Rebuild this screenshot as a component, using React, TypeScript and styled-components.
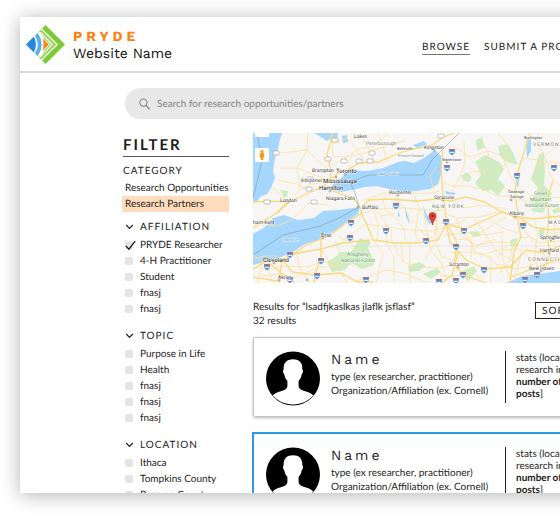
import React, { useState } from "react";
import styled, { createGlobalStyle, css } from "styled-components";

const GlobalStyle = createGlobalStyle`
  * { box-sizing: border-box; }
  body { margin: 0; background: #fff; overflow: hidden; text-rendering: geometricPrecision; }
  button, input { font: inherit; color: inherit; text-rendering: inherit; }
`;

const Stage = styled.div`
  height: 100vh;
  padding: 17px 0 24px 20px;
  overflow: hidden;
  font-family: Lato, "Liberation Sans", sans-serif;
  font-size: 10px;
  line-height: 16px;
  color: #1c1c1c;
`;

const Page = styled.div`
  height: 100%;
  margin-right: -30px;
  padding-right: 30px;
  overflow: hidden;
  background: #fff;
  box-shadow: 0 2px 18px rgba(0, 0, 0, 0.3);
`;

const Header = styled.header`
  display: flex;
  align-items: center;
  height: 56px;
  padding-left: 6px;
  border-bottom: 2px solid #d9d9d9;
  white-space: nowrap;
`;

const Brand = styled.a`
  display: flex;
  align-items: center;
  gap: 8px;
  flex: 0 0 396px;
  color: #111;
  text-decoration: none;
  font-family: "Work Sans", Inter, "Liberation Sans", sans-serif;
`;

const BrandText = styled.span`
  display: flex;
  flex-direction: column;
  padding-top: 3px;
  font-size: 14px;
  line-height: 17px;
`;

const BrandTitle = styled.strong`
  color: #fb8312;
  letter-spacing: 4px;
`;

const Nav = styled.nav`
  display: flex;
  gap: 14px;
  padding-top: 7px;
`;

const NavLink = styled.a<{ $active?: boolean }>`
  color: #1c1c1c;
  font-size: 10px;
  line-height: 13px;
  letter-spacing: 1px;
  text-decoration: none;
  border-bottom: 1px solid ${(p) => (p.$active ? "#777" : "transparent")};
`;

const SearchBar = styled.label`
  display: flex;
  align-items: center;
  gap: 7px;
  height: 31px;
  margin: 15px 0 0 105px;
  padding-left: 14px;
  border-radius: 16px 0 0 16px;
  background: #e8e8e8;
  color: #858585;
`;

const SearchInput = styled.input`
  flex: 1;
  min-width: 0;
  padding: 0;
  border: 0;
  outline: 0;
  background: transparent;
  &::placeholder { color: #858585; opacity: 1; }
`;

const Columns = styled.div`
  display: grid;
  grid-template-columns: 107px minmax(0, 1fr);
  gap: 24px;
  padding: 14px 0 0 102px;
`;

const Sidebar = styled.aside`
  white-space: nowrap;
`;

const FilterTitle = styled.h2`
  margin: 0 0 6px 1px;
  padding-top: 2px;
  border-bottom: 1px solid #555;
  font-size: 15px;
  line-height: 21px;
  letter-spacing: 2px;
`;

const GroupLabel = styled.h3`
  margin: 0 0 0 1px;
  font-size: 10px;
  font-weight: 400;
  line-height: 17px;
  letter-spacing: 1px;
`;

const CategoryButton = styled.button<{ $selected?: boolean }>`
  display: block;
  width: 100%;
  height: 16px;
  padding: 0 3px;
  border: 0;
  text-align: left;
  background: ${(p) => (p.$selected ? "#ffdcbc" : "transparent")};
`;

const Groups = styled.div`
  display: flex;
  flex-direction: column;
  gap: 9px;
  padding-top: 5px;
`;

const GroupToggle = styled.button`
  display: flex;
  align-items: center;
  gap: 6px;
  height: 20px;
  padding: 0 0 0 3px;
  border: 0;
  background: transparent;
  letter-spacing: 1px;
`;

const Option = styled.label`
  display: flex;
  align-items: center;
  gap: 7px;
  height: 16px;
  padding-left: 3px;
`;

const TickBox = styled.span`
  display: grid;
  width: 8px;
  height: 8px;
  > * { grid-area: 1 / 1; }
  svg { place-self: end center; pointer-events: none; overflow: visible; }
`;

const Check = styled.input`
  appearance: none;
  width: 8px;
  height: 8px;
  margin: 0;
  border-radius: 2px;
  background: #e4e4e4;
`;

const Main = styled.main`
  min-width: 0;
`;

const MapFrame = styled.div`
  height: 150px;
  overflow: hidden;
  svg { display: block; height: 100%; }
`;

const ResultsBar = styled.div`
  display: flex;
  justify-content: space-between;
  align-items: flex-start;
  padding: 17px 0 9px;
  line-height: 14px;
  white-space: nowrap;
`;

const SortSlot = styled.div`
  flex: 0 0 25px;
  min-width: 0;
  padding-top: 2px;
`;

const SortButton = styled.button`
  height: 17px;
  padding: 0 6px;
  border: 1px solid #222;
  background: #fff;
  line-height: 14px;
  letter-spacing: 1px;
`;

const Cards = styled.div`
  display: flex;
  flex-direction: column;
  gap: 16px;
`;

const Card = styled.article<{ $selected?: boolean }>`
  display: grid;
  grid-template-columns: 54px minmax(0, 1fr) 55px;
  height: 80px;
  padding: 13px 0 12px 12px;
  border: 1px solid #c4c4c4;
  border-radius: 2px;
  box-shadow: 0 1px 3px rgba(0, 0, 0, 0.28);
  white-space: nowrap;
  margin-right: -4px;
  padding-right: 3px;
  ${(p) =>
    p.$selected &&
    css`
      border-color: transparent;
      border-radius: 0;
      outline: 2px solid #2b9be8;
      outline-offset: -1px;
      box-shadow: none;
    `}
`;

const Details = styled.div`
  padding-left: 11px;
  line-height: 14px;
`;

const PersonName = styled.h3`
  margin: 0 0 1px;
  font: 400 14px/18px "Work Sans", Inter, "Liberation Sans", sans-serif;
  letter-spacing: 3px;
`;

const Stats = styled.div`
  height: 52px;
  padding: 1px 0 0 10px;
  border-left: 1px solid #222;
  line-height: 12px;
`;

const Logo = () => (
  <svg width="39" height="39" viewBox="0 0 39 39" aria-hidden="true">
    <path d="M19.5 0 39 19.5 19.5 39 16.1 35.6 32.2 19.5 16.1 3.4Z" fill="#7bcb35" />
    <path d="M15.2 4.3 30.4 19.5 15.2 34.7 12.8 32.3Q19.4 27 20 19.5 19.4 12 12.8 6.7Z" fill="#9ad95c" />
    <path d="M14.2 7.2 26.3 19.5 14.2 31.8" fill="none" stroke="#fff" strokeWidth="1.1" />
    <path d="M15.2 11 23.700 19.500 15.200 28Q18.600 19.500 15.200 11Z" fill="#fff" />
    <path d="M16.5 13.2 22.7 19.5 16.5 25.8Q18.6 19.5 16.5 13.2Z" fill="#fb8312" />
    <path d="M11.8 7.7 9 10.5Q14.5 19.5 9 28.5L11.8 31.3Q19.4 19.5 11.8 7.7Z" fill="#55b1ed" />
    <path d="M7.9 11.6 0 19.5 7.9 27.4Q12 19.5 7.9 11.6Z" fill="#2489df" />
  </svg>
);

const SearchIcon = () => (
  <svg width="11" height="12" viewBox="0 0 11 12" fill="none" stroke="currentColor" aria-hidden="true">
    <circle cx="4.4" cy="4.6" r="3.6" strokeWidth="1.1" />
    <path d="m7 7.4 3.5 3.8" strokeWidth="1.3" />
  </svg>
);

const Chevron = () => (
  <svg width="9" height="6" viewBox="0 0 9 6" fill="none" stroke="#222" strokeWidth="1.2" aria-hidden="true">
    <path d="m1.2 1 3.3 3.5L7.8 1" />
  </svg>
);

const TickMark = () => (
  <svg width="11" height="10" viewBox="0 0 11 10" fill="none" stroke="#111" strokeWidth="1.2" aria-hidden="true">
    <path d="m.8 4.8 3.1 3.4L10.2.2" />
  </svg>
);

const Avatar = () => (
  <svg width="54" height="55" viewBox="0 0 54 55" aria-hidden="true">
    <circle cx="27" cy="27.5" r="27" fill="#000" />
    <path
      d="M27 8.3c6.5 0 9.7 3.6 9.3 10.2 1 .2 1 3.6-.5 4.4-.5 3.4-1.5 5.2-3.2 6.8v5.2c.4 3.6 3.8 4.5 8.2 5.8 3.2 1 5.2 2.2 6.6 3.9C42 50.4 35.2 53.5 27 53.5S12 50.4 6.6 44.6c1.4-1.7 3.4-2.9 6.6-3.9 4.4-1.3 7.8-2.2 8.2-5.8v-5.2c-1.7-1.6-2.7-3.4-3.2-6.8-1.5-.8-1.5-4.2-.5-4.4C17.3 11.9 20.5 8.3 27 8.3Z"
      fill="#fff"
    />
  </svg>
);

const MapText = styled.text<{ $tone?: string; $size?: number }>`
  font-family: Roboto, "Liberation Sans", sans-serif;
  font-size: ${(p) => p.$size ?? 5}px;
  fill: ${(p) => p.$tone ?? "#444"};
  stroke: #fff;
  stroke-width: 1px;
  stroke-opacity: 0.7;
  paint-order: stroke;
`;

const highways = [
  "M0 95 14 86 24 80 36 69 47 64 60 58 70 53 77 48 84 41 93 38 106 30 125 29 146 20 160 16 178 13 190 4 202 0",
  "M36 69 16 68 0 69M24 80 35 68M77 57 88 61 101 66 107 74 109 80 93 90 76 103 53 112 39 122 30 128 15 127 0 136",
  "M109 74 116 67 133 66 150 67 165 68 184 66 197 68 213 64 232 69 247 78 261 83 280 86 307 83",
  "M190 15 188 38 190 62 192 76 193 90 203 107 205 120 199 142 189 150",
  "M107 79 114 92 120 107 142 110 165 110 185 107 193 91 212 96 232 87 249 79 262 84",
  "M23 129 34 124 45 120 68 116 89 110 117 107M15 129 33 144 42 150M29 126 39 139 62 142 88 140 104 149 120 149",
  "M68 101 68 123 62 143 61 150M29 127 26 150M0 144 23 148 34 142",
  "M265 81 262 60 264 42 270 22 277 0M264 83 268 104 261 119 257 150M265 83 280 94 295 97 307 96",
  "M193 91 197 109 212 126 232 136 257 134 273 117 290 120 307 113M203 118 201 132 213 143 234 150",
  "M300 47 294 67 296 84 294 103 297 121 290 138M256 145 276 137 307 126M77 49 78 38 74 21 80 0",
];

const roads = [
  "M8 92 24 93 38 87 56 70 75 72M36 69 47 57 60 51 77 47M27 35 44 35 64 43 77 48M25 47 44 51 56 58M20 54 35 69M44 35 47 56M27 20 54 17 66 28 78 39M55 0 54 17 44 35M78 0 80 24 96 23 105 16 121 13 136 0M80 11 94 5 102 14 112 29M95 38 98 23 116 19 133 13 152 8M106 0 113 11 121 28M124 0 130 11 133 28M70 23 81 32 96 23",
  "M109 68 130 60 153 59 173 61 187 58M110 80 125 76 151 75 172 77 190 78M116 67 121 78 125 91 124 108M130 66 132 76 142 84 151 96 153 110M142 57 144 69 151 74 158 87 170 100 181 106M160 59 165 72 171 82 175 105M112 91 134 94 157 97 179 98 193 94M120 107 130 121 123 150M141 110 145 121 154 131 170 134 184 135 202 132M157 110 157 150M175 105 178 118 189 131 194 149M104 148 133 137 150 140 175 150",
  "M193 66 204 50 212 31 211 9M188 49 200 53 214 53 230 56 244 63 262 63M196 66 210 75 230 72 253 76M191 80 204 85 227 84 244 79M184 78 183 109 172 126M204 86 209 104 223 112 243 109 264 110M222 86 233 102 244 119 260 128M235 85 249 95 267 101M217 105 222 120 237 124 250 139M203 107 217 105 237 94 253 84M198 119 214 119 232 121 254 114M212 128 215 150M237 124 238 150M249 98 249 124 258 149M184 33 177 43 182 61M200 13 217 24 235 18 256 25M208 51 219 38 238 40 257 29M229 8 236 22 229 43 244 55 263 57M245 0 256 14 251 29 259 46 268 56 284 66 307 64",
  "M269 25 285 27 307 30M263 65 279 70 307 76M269 85 273 101 287 110 307 108M273 117 278 132 275 145M265 105 278 104 285 116 299 130 307 129M281 84 285 101 282 118 284 137M294 103 307 99M302 84 301 107 305 125M285 0 289 21 284 41 289 65M307 10 292 23 298 44 307 52M260 111 257 127 246 141M269 113 267 125 261 149M242 131 265 136 284 130",
  "M0 134 15 136 34 133 54 134 70 129 96 129 122 129M0 122 13 130 19 147M9 128 5 150M43 120 47 136 57 150M68 116 77 130 88 140 94 150M82 108 88 122 101 134M35 147 54 139 68 134 90 133M8 143 28 141M84 103 97 109 105 120 119 122M133 91 134 112 141 124 141 150M112 92 98 101 88 111M0 126 12 123 24 123",
  "M181 86 191 91 202 91 213 87M190 102 206 101 218 99 232 102 250 99M207 93 218 111 218 126M220 117 231 109 244 106M184 88 181 100 187 107M184 112 188 123 200 128 205 139M186 142 200 144 218 138 229 146M244 125 250 117 267 116M166 76 162 100 166 110M148 110 150 130M127 83 138 96 139 110M120 72 129 83 142 80",
];

const forests = [
  "M98 119 107 105 118 109 115 115 119 124 121 132 109 136 98 130 92 137 79 139 74 129 84 123 86 119Z",
  "M222 29 232 22 246 29 251 36 245 46 252 53 245 63 239 57 230 58 222 50 228 42 225 34Z",
  "M245 13 255 11 260 20 265 32 252 28 247 23Z",
  "M286 22 291 19 292 38 291 52 299 60 290 80 278 78 281 64 285 55 278 46Z",
  "M223 7 229 4 232 14 224 18ZM208 43 214 39 219 44 216 49 211 48ZM27 57 35 58 34 64 31 64Z",
  "M155 133 166 129 173 133 166 138 156 139ZM170 141 184 135 188 139 178 146ZM216 99 225 98 228 103 220 104ZM257 107 264 105 264 113 258 114ZM182 72 188 75 184 78Z",
  "M207 139 221 133 224 138 215 148ZM299 77 307 74 307 79 301 81ZM286 95 292 94 290 105 286 103Z",
];

const shields = [
  [98, 90], [97, 105], [37, 122], [14, 134], [68, 128], [64, 143], [133, 98], [37, 147], [143, 73],
  [199, 19], [194, 35], [264, 43], [193, 89], [211, 98], [173, 108], [203, 114], [270, 93], [231, 137],
  [210, 142], [203, 148], [186, 149], [284, 142], [301, 35], [272, 147], [113, 147],
];
const routes = [[23, 20], [82, 7], [106, 28], [119, 20], [91, 28], [56, 56], [57, 46], [14, 69], [61, 69], [188, 3], [117, 28], [75, 26]];

type Place = [string, number, number, number?, string?];
const places: Place[] = [
  ["Toronto", 83, 40, 6, "#222"], ["Brampton", 59, 39], ["Mississauga", 70, 50, 6, "#222"],
  ["Kitchener", 48, 49], ["Hamilton", 66, 57, 6, "#222"], ["London", 27, 69], ["Niagara Falls", 73, 67],
  ["Buffalo", 109, 76], ["Rochester", 136, 61], ["Erie", 68, 104, 6], ["Cleveland", 10, 129, 6, "#222"],
  ["Akron", 25, 146], ["ham-Kent", 0, 91], ["Peterborough", 113, 12, 5, "#888"], ["Lakes", 101, 5],
  ["Belleville", 144, 17, 4], ["Prince Edward", 145, 24, 4, "#888"], ["Kingston", 171, 16], ["Watertown", 189, 28, 4],
  ["Syracuse", 181, 66], ["Albany", 256, 82], ["Saratoga", 255, 60, 4], ["Springs", 257, 65, 4],
  ["Burlington", 271, 6, 4], ["Scranton", 196, 133], ["Springfield", 287, 106], ["Hartford", 287, 119],
  ["New Haven", 276, 137], ["Lake Ontario", 124, 42, 4, "#5d9fc9"], ["Lake Erie", 29, 108, 4, "#5d9fc9"],
  ["Allegheny", 94, 123, 5, "#5c956b"], ["National Forest", 88, 129, 5, "#5c956b"],
  ["Green", 281, 62, 5, "#5c956b"], ["Mountain", 277, 68, 5, "#5c956b"], ["National Forest", 272, 74, 5, "#5c956b"],
];
const dots = [[92, 41], [83, 44], [57, 49], [77, 58], [35, 69], [105, 74], [145, 62], [70, 105], [21, 130], [26, 147], [181, 17], [194, 29], [190, 67], [262, 84], [258, 67], [205, 134], [298, 107], [296, 120], [288, 138], [54, 147]];
const states: [string, number, number][] = [["NEW YORK", 179, 75], ["VERMONT", 280, 13], ["MASSACHUSETTS", 295, 91], ["CONNECTICUT", 275, 128]];

const StateText = styled(MapText)`
  letter-spacing: 1px;
`;

const RegionMap = () => (
  <svg viewBox="0 0 307 150" preserveAspectRatio="xMinYMin slice" role="img" aria-label="Map of New York">
    <rect width="340" height="150" fill="#f7f6f4" />
    <g fill="#ceedc4">{forests.map((d) => <path key={d} d={d} />)}</g>
    <g fill="#a5d6fd">
      <path d="M0 0H29L27 6 25 15 23 21 21 31 20 38 22 45 18 55 14 61 7 64 4 69H0Z" />
      <path d="M61 0H85L84 7 78 5 74 8 66 3ZM89 3 94 2 95 9 90 10Z" />
      <path d="M79 57 78 53 86 47 92 41 98 37 114 38 130 35 145 29 152 28 161 30 171 25 182 17 188 23 189 39 185 51 177 56 163 58 147 58 136 56 124 53 112 54 99 57 88 59Z" />
      <path d="M0 101 12 94 20 85 31 82 45 87 61 85 70 78 85 77 107 74 105 81 94 89 83 97 68 106 52 111 40 119 28 124 15 128 0 132Z" />
      <path d="M253 150 269 143 285 141 307 138V150ZM273 7 278 3 278 18 274 25ZM263 51 267 43 265 54ZM192 58 203 60 201 62 193 61Z" />
      <path d="M152 74 156 87 157 92 153 84ZM170 72 172 84 177 92 178 89 173 80ZM145 77 147 83 145 84ZM160 12 171 8 174 11 164 15Z" />
    </g>
    <g fill="none" stroke="#fbe2a0" strokeWidth=".8">{roads.map((d) => <path key={d} d={d} />)}</g>
    <g fill="none" stroke="#fbd978" strokeWidth="1.3">{highways.map((d) => <path key={d} d={d} />)}</g>
    <path d="M4 0 9 27 4 49 0 65M0 122 30 102 67 93 86 85 106 74 102 60 97 49 116 42H170L179 27 194 12 206 0" fill="none" stroke="#839aaa" strokeWidth=".6" />
    <path d="M80 113H307M57 96V113" fill="none" stroke="#c5c5c5" strokeWidth=".4" strokeDasharray="2 1" />
    <g fill="#fff" stroke="#888" strokeWidth=".5">
      {routes.map(([x, y]) => <rect key={`${x}-${y}`} x={x - 3} y={y - 2} width="6" height="4" rx="1" />)}
    </g>
    {shields.map(([x, y]) => (
      <g key={`${x}-${y}`} transform={`translate(${x} ${y})`}>
        <path d="M-3-3H3Q4 1 0 3.5-4 1-3-3Z" fill="#4f86d0" stroke="#fff" strokeWidth=".4" />
        <path d="M-3-2.4H3" stroke="#c7645f" strokeWidth="1" />
        <path d="M-1.8.4H1.8" stroke="#fff" strokeWidth="1.2" />
      </g>
    ))}
    <g fill="#fff" stroke="#555" strokeWidth=".5">{dots.map(([x, y]) => <circle key={`${x}-${y}`} cx={x} cy={y} r="1" />)}</g>
    {places.map(([name, x, y, size, tone]) => (
      <MapText key={`${name}-${x}`} x={x} y={y} $size={size} $tone={tone}>{name}</MapText>
    ))}
    {states.map(([name, x, y]) => <StateText key={name} x={x} y={y} $tone="#777">{name}</StateText>)}
    <path d="M179.5 92C178.5 87 176 86 176 83a3.5 3.5 0 0 1 7 0C183 86 180.5 87 179.5 92Z" fill="#e84135" stroke="#9b2923" strokeWidth=".6" />
    <circle cx="179.5" cy="83" r="1.1" fill="#65150f" />
    <path d="M2 0H16V4H2ZM2 15H16V29H2Z" fill="#fff" />
    <circle cx="9" cy="18.5" r="1.7" fill="#f5aa28" />
    <path d="M7 20H11L11.5 24 10.5 24.5 10 27H8L7.5 24.5 6.5 24Z" fill="#eea11d" />
  </svg>
);

const filters = [
  { title: "AFFILIATION", options: ["PRYDE Researcher", "4-H Practitioner", "Student", "fnasj", "fnasj"] },
  { title: "TOPIC", options: ["Purpose in Life", "Health", "fnasj", "fnasj", "fnasj"] },
  { title: "LOCATION", options: ["Ithaca", "Tompkins County", "Broome County"] },
];

const FilterOption = ({ label, initial }: { label: string; initial: boolean }) => {
  const [checked, setChecked] = useState(initial);
  return (
    <Option>
      <TickBox>
        <Check type="checkbox" checked={checked} onChange={() => setChecked(!checked)} />
        {checked && <TickMark />}
      </TickBox>
      {label}
    </Option>
  );
};

const PersonCard = ({ selected }: { selected?: boolean }) => (
  <Card $selected={selected}>
    <Avatar />
    <Details>
      <PersonName>Name</PersonName>
      type (ex researcher, practitioner)
      <br />
      Organization/Affiliation (ex. Cornell)
    </Details>
    <Stats>
      stats (location,
      <br />
      research interests,
      <br />
      <b>
        number of
        <br />
        posts
      </b>
      {"}"}
    </Stats>
  </Card>
);

export default function App() {
  return (
    <Stage>
      <GlobalStyle />
      <Page>
        <Header>
          <Brand href="#">
            <Logo />
            <BrandText>
              <BrandTitle>PRYDE</BrandTitle>
              <span>Website Name</span>
            </BrandText>
          </Brand>
          <Nav>
            <NavLink href="#browse" $active>BROWSE</NavLink>
            <NavLink href="#submit">SUBMIT A PROJECT</NavLink>
          </Nav>
        </Header>
        <SearchBar>
          <SearchIcon />
          <SearchInput type="search" aria-label="Search" placeholder="Search for research opportunities/partners" />
        </SearchBar>
        <Columns>
          <Sidebar>
            <FilterTitle>FILTER</FilterTitle>
            <GroupLabel>CATEGORY</GroupLabel>
            <CategoryButton>Research Opportunities</CategoryButton>
            <CategoryButton $selected>Research Partners</CategoryButton>
            <Groups>
              {filters.map((group) => (
                <section key={group.title}>
                  <GroupToggle aria-expanded="true">
                    <Chevron />
                    {group.title}
                  </GroupToggle>
                  {group.options.map((label, i) => (
                    <FilterOption key={i} label={label} initial={label === "PRYDE Researcher"} />
                  ))}
                </section>
              ))}
            </Groups>
          </Sidebar>
          <Main>
            <MapFrame>
              <RegionMap />
            </MapFrame>
            <ResultsBar>
              <div>
                Results for “lsadfjkaslkas jlaflk jsflasf”
                <br />
                32 results
              </div>
              <SortSlot>
                <SortButton>SORT BY</SortButton>
              </SortSlot>
            </ResultsBar>
            <Cards>
              <PersonCard />
              <PersonCard selected />
            </Cards>
          </Main>
        </Columns>
      </Page>
    </Stage>
  );
}
